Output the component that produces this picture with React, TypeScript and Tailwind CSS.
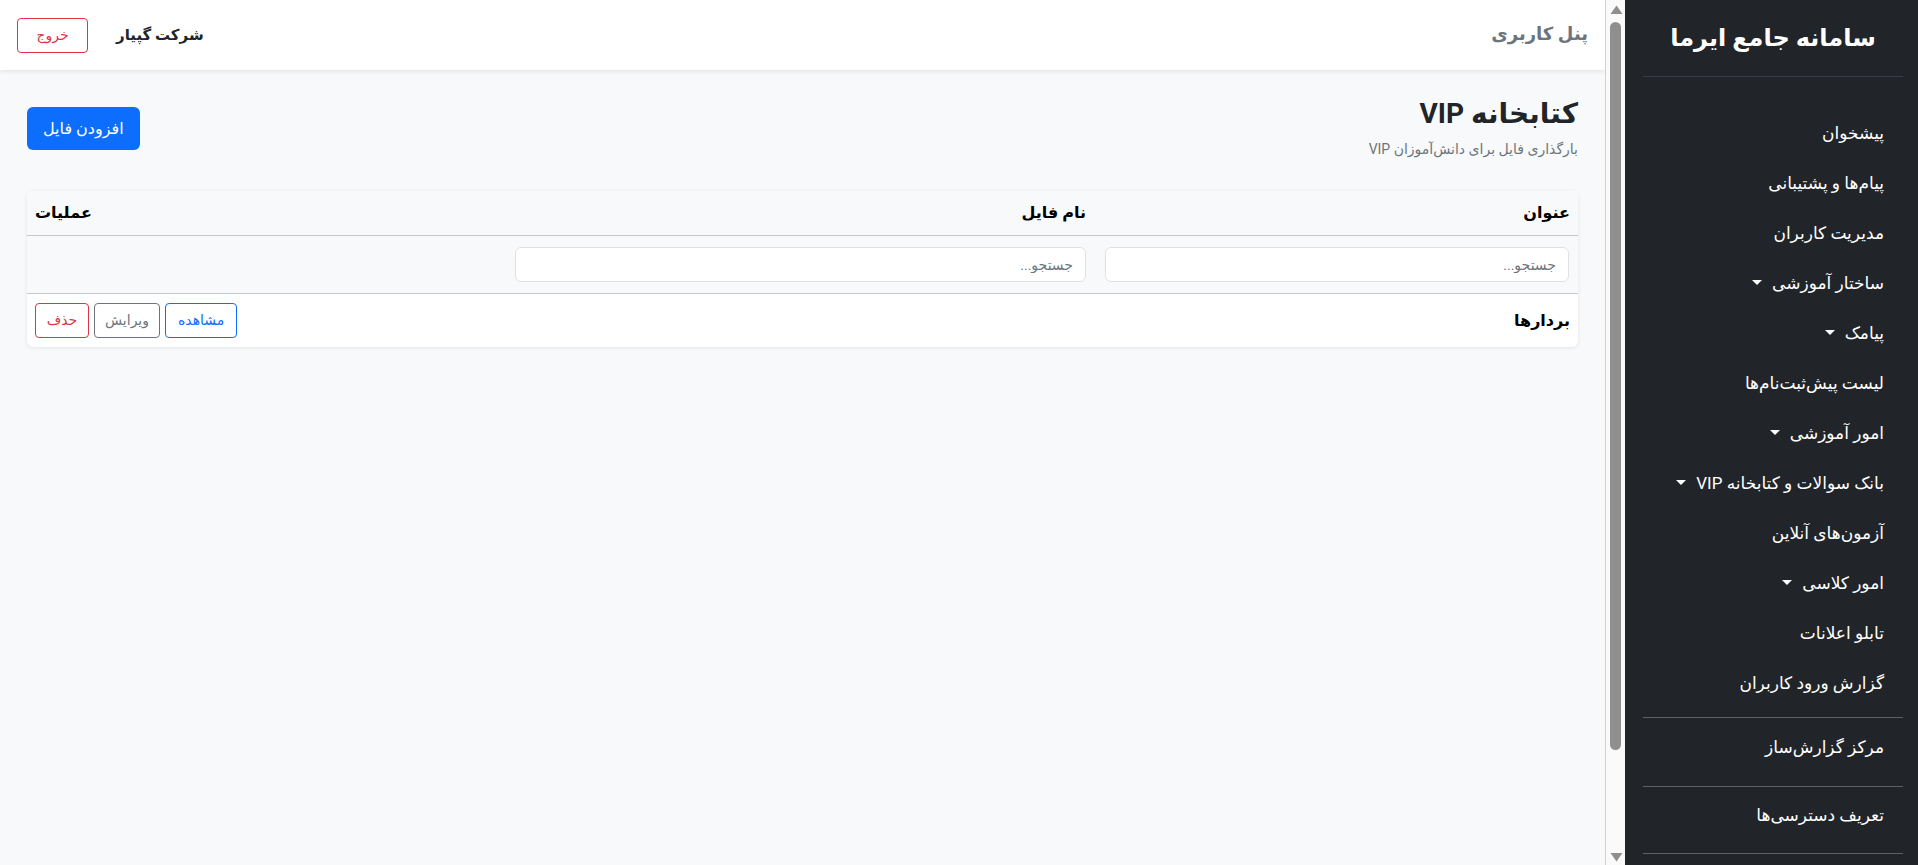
import { useState } from 'react'

type NavItem = { label: string; caret?: boolean }

const navItems: NavItem[] = [
  { label: 'پیشخوان' },
  { label: 'پیام\u200cها و پشتیبانی' },
  { label: 'مدیریت کاربران' },
  { label: 'ساختار آموزشی', caret: true },
  { label: 'پیامک', caret: true },
  { label: 'لیست پیش\u200cثبت\u200cنام\u200cها' },
  { label: 'امور آموزشی', caret: true },
  { label: 'بانک سوالات و کتابخانه VIP', caret: true },
  { label: 'آزمون\u200cهای آنلاین' },
  { label: 'امور کلاسی', caret: true },
  { label: 'تابلو اعلانات' },
  { label: 'گزارش ورود کاربران' },
]

function NavLink({ item }: { item: NavItem }) {
  return (
    <a href="#" className="h-[50px] px-[19px] flex items-center gap-[10px] text-[17px] text-white">
      <span>{item.label}</span>
      {item.caret && (
        <span className="mt-[-3px] w-0 h-0 border-t-[5px] border-t-white border-x-[5px] border-x-transparent" />
      )}
    </a>
  )
}

function Sidebar() {
  return (
    <aside dir="rtl" className="w-[293px] shrink-0 h-full overflow-hidden bg-[#212529] text-white pr-[15px] pl-[18px]">
      <div className="h-[76px] flex items-center justify-center text-[24px] font-bold">
        سامانه جامع ایرما
      </div>
      <hr className="border-t border-[#3a3e44]" />
      <nav className="mt-[32px]">
        {navItems.map((item) => (
          <NavLink key={item.label} item={item} />
        ))}
      </nav>
      <hr className="mt-[8px] mb-[5px] border-t border-[#5d6166]" />
      <NavLink item={{ label: 'مرکز گزارش\u200cساز' }} />
      <hr className="mt-[13px] mb-[4px] border-t border-[#5d6166]" />
      <NavLink item={{ label: 'تعریف دسترسی\u200cها' }} />
      <hr className="mt-[12px] border-t border-[#5d6166]" />
    </aside>
  )
}

// page scrollbar as it appears in the screenshot
function ScrollRail() {
  return (
    <div className="w-[20px] shrink-0 h-full bg-[#fafafa] border-l border-[#d2d2d2] flex flex-col items-center">
      <svg width="13" height="9" viewBox="0 0 13 9" className="mt-[5px] ml-px">
        <path d="M6.5 0.5 L12.5 9 L0.5 9 Z" fill="#8f8f8f" />
      </svg>
      <div className="mt-[8px] w-[11px] h-[728px] rounded-full bg-[#8f8f8f]" />
      <div className="flex-1" />
      <svg width="13" height="9" viewBox="0 0 13 9" className="mb-[3px] ml-px">
        <path d="M0.5 0 L12.5 0 L6.5 8.5 Z" fill="#8f8f8f" />
      </svg>
    </div>
  )
}

const cols = 'grid grid-cols-[484px_587px_1fr]'
const inputCls =
  'w-full h-[35px] px-3 text-[14px] bg-white border border-[#dee2e6] rounded-[6px] outline-none placeholder:text-[#6c757d]'

function FileTable() {
  const [titleQuery, setTitleQuery] = useState('')
  const [nameQuery, setNameQuery] = useState('')
  return (
    <div className="mt-[31px] bg-white rounded-[6px] shadow-[0_1px_4px_rgba(0,0,0,0.09)] overflow-hidden">
      <div className={`${cols} h-[45px] items-center bg-[#f8f9fa] border-b border-[#c6c9cc] text-[16px] font-bold text-black`}>
        <div className="px-2">عنوان</div>
        <div className="px-2">نام فایل</div>
        <div className="px-2 text-left">عملیات</div>
      </div>
      <div className={`${cols} h-[58px] items-center bg-[#f8f9fa] border-b border-[#c6c9cc]`}>
        <div className="pr-[9px] pl-[11px]">
          <input value={titleQuery} onChange={(e) => setTitleQuery(e.target.value)} placeholder="جستجو..." className={inputCls} />
        </div>
        <div className="px-2">
          <input value={nameQuery} onChange={(e) => setNameQuery(e.target.value)} placeholder="جستجو..." className={inputCls} />
        </div>
        <div />
      </div>
      <div className={`${cols} h-[53px] items-center`}>
        <div className="px-2 text-[16px] font-bold text-black">بردارها</div>
        <div />
        <div className="px-2 flex justify-end gap-[5px]">
          <button className="h-[35px] px-3 text-[14px] text-[#0d6efd] border border-[#0d6efd] rounded-[4px]">
            مشاهده
          </button>
          <button className="h-[35px] px-[10px] text-[14px] text-[#6c757d] border border-[#6c757d] rounded-[4px]">
            ویرایش
          </button>
          <button className="h-[35px] w-[54px] text-[14px] text-[#dc3545] border border-[#dc3545] rounded-[4px]">
            حذف
          </button>
        </div>
      </div>
    </div>
  )
}

export default function App() {
  return (
    <div className="flex w-full h-[865px] overflow-hidden font-['Roboto','DejaVu_Sans',sans-serif] text-[#212529]">
      <div dir="rtl" className="flex-1 h-full overflow-hidden bg-[#f8f9fa]">
        <header className="h-[70px] bg-white shadow-[0_2px_4px_rgba(0,0,0,0.08)] flex items-center justify-between px-[17px]">
          <h1 className="text-[18px] font-bold text-[#6c757d] mb-[4px]">پنل کاربری</h1>
          <div className="flex items-center gap-[28px]">
            <span className="text-[15px] font-bold">شرکت گپیار</span>
            <button className="h-[35px] w-[71px] text-[14px] text-[#dc3545] border border-[#dc3545] rounded-[4px]">
              خروج
            </button>
          </div>
        </header>
        <main className="px-[27px] pt-[27px]">
          <div className="flex items-center justify-between">
            <div>
              <h2 className="text-[28px] font-bold leading-[34px] mb-[8px]">کتابخانه VIP</h2>
              <p className="text-[14px] text-[#6c757d]">{'بارگذاری فایل برای دانش\u200cآموزان VIP'}</p>
            </div>
            <button className="h-[43px] px-4 text-[16px] text-white bg-[#0d6efd] rounded-[6px]">
              افزودن فایل
            </button>
          </div>
          <FileTable />
        </main>
      </div>
      <ScrollRail />
      <Sidebar />
    </div>
  )
}
